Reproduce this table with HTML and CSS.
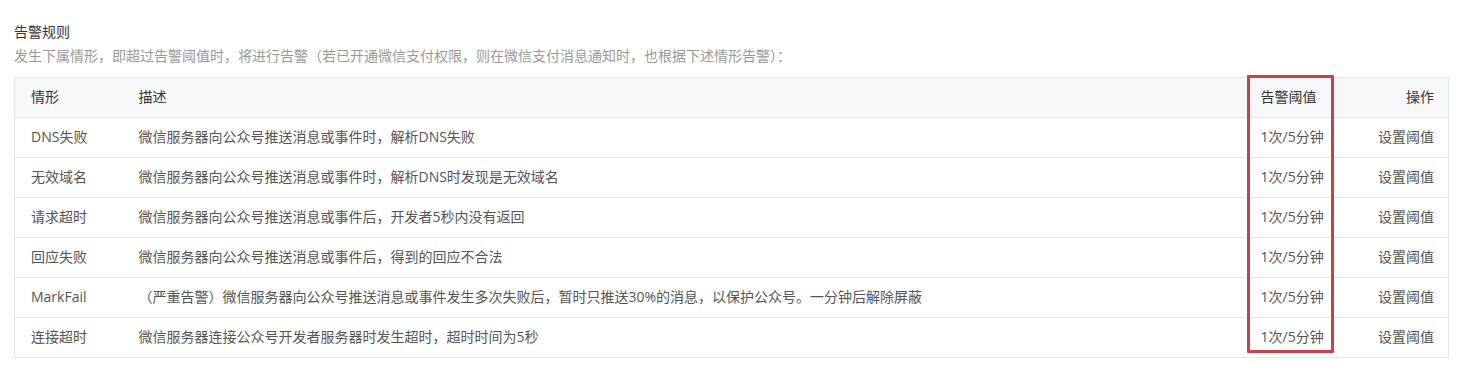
FILE: index.html
```html
<!DOCTYPE html>
<html lang="zh-CN">
<head>
<meta charset="utf-8">
<title>告警规则</title>
<link rel="stylesheet" href="styles.css">
</head>
<body>
<section class="rules">
  <h2 class="rules-title">告警规则</h2>
  <p class="rules-desc">发生下属情形，即超过告警阈值时，将进行告警（若已开通微信支付权限，则在微信支付消息通知时，也根据下述情形告警）：</p>
  <div class="table-wrap">
    <table class="rules-table">
      <colgroup>
        <col class="c-case">
        <col class="c-desc">
        <col class="c-limit">
        <col class="c-op">
      </colgroup>
      <thead>
        <tr><th>情形</th><th>描述</th><th>告警阈值</th><th class="op">操作</th></tr>
      </thead>
      <tbody>
        <tr><td>DNS失败</td><td>微信服务器向公众号推送消息或事件时，解析DNS失败</td><td>1次/5分钟</td><td class="op">设置阈值</td></tr>
        <tr><td>无效域名</td><td>微信服务器向公众号推送消息或事件时，解析DNS时发现是无效域名</td><td>1次/5分钟</td><td class="op">设置阈值</td></tr>
        <tr><td>请求超时</td><td>微信服务器向公众号推送消息或事件后，开发者5秒内没有返回</td><td>1次/5分钟</td><td class="op">设置阈值</td></tr>
        <tr><td>回应失败</td><td>微信服务器向公众号推送消息或事件后，得到的回应不合法</td><td>1次/5分钟</td><td class="op">设置阈值</td></tr>
        <tr><td>MarkFail</td><td>（严重告警）微信服务器向公众号推送消息或事件发生多次失败后，暂时只推送30%的消息，以保护公众号。一分钟后解除屏蔽</td><td>1次/5分钟</td><td class="op">设置阈值</td></tr>
        <tr><td>连接超时</td><td>微信服务器连接公众号开发者服务器时发生超时，超时时间为5秒</td><td>1次/5分钟</td><td class="op">设置阈值</td></tr>
      </tbody>
    </table>
    <div class="highlight"></div>
  </div>
</section>
</body>
</html>
```
FILE: styles.css
```css
html, body {
  margin: 0;
  padding: 0;
  background: #ffffff;
}
body {
  font-family: "Open Sans", "Noto Sans CJK SC", "Noto Sans", sans-serif;
  font-size: 14px;
  color: #353535;
}
.rules {
  padding: 22px 9px 0 14px;
}
.rules-title {
  margin: 0;
  font-size: 14px;
  font-weight: normal;
  line-height: 20px;
  color: #353535;
}
.rules-desc {
  margin: 4px 0 0 0;
  line-height: 20px;
  color: #9a9a9a;
}
.table-wrap {
  position: relative;
  margin-top: 11px;
}
.rules-table {
  width: 100%;
  border-collapse: collapse;
  table-layout: fixed;
  border: 1px solid #e7e7eb;
}
.c-case { width: 108px; }
.c-limit { width: 95px; }
.c-op { width: 109px; }
.rules-table th,
.rules-table td {
  height: 36px;
  padding: 0 0 3px 16px;
  text-align: left;
  font-weight: normal;
  color: #555555;
  border-bottom: 1px solid #e7e7eb;
  white-space: nowrap;
  vertical-align: middle;
}
.rules-table th {
  background: #f6f8f9;
  color: #353535;
}
.rules-table .op {
  text-align: right;
  padding: 0 14px 3px 0;
}
.highlight {
  position: absolute;
  left: 1233px;
  top: -2px;
  width: 81px;
  height: 272px;
  border: 3px solid #cc3f47;
  border-radius: 1px;
  pointer-events: none;
}
```
